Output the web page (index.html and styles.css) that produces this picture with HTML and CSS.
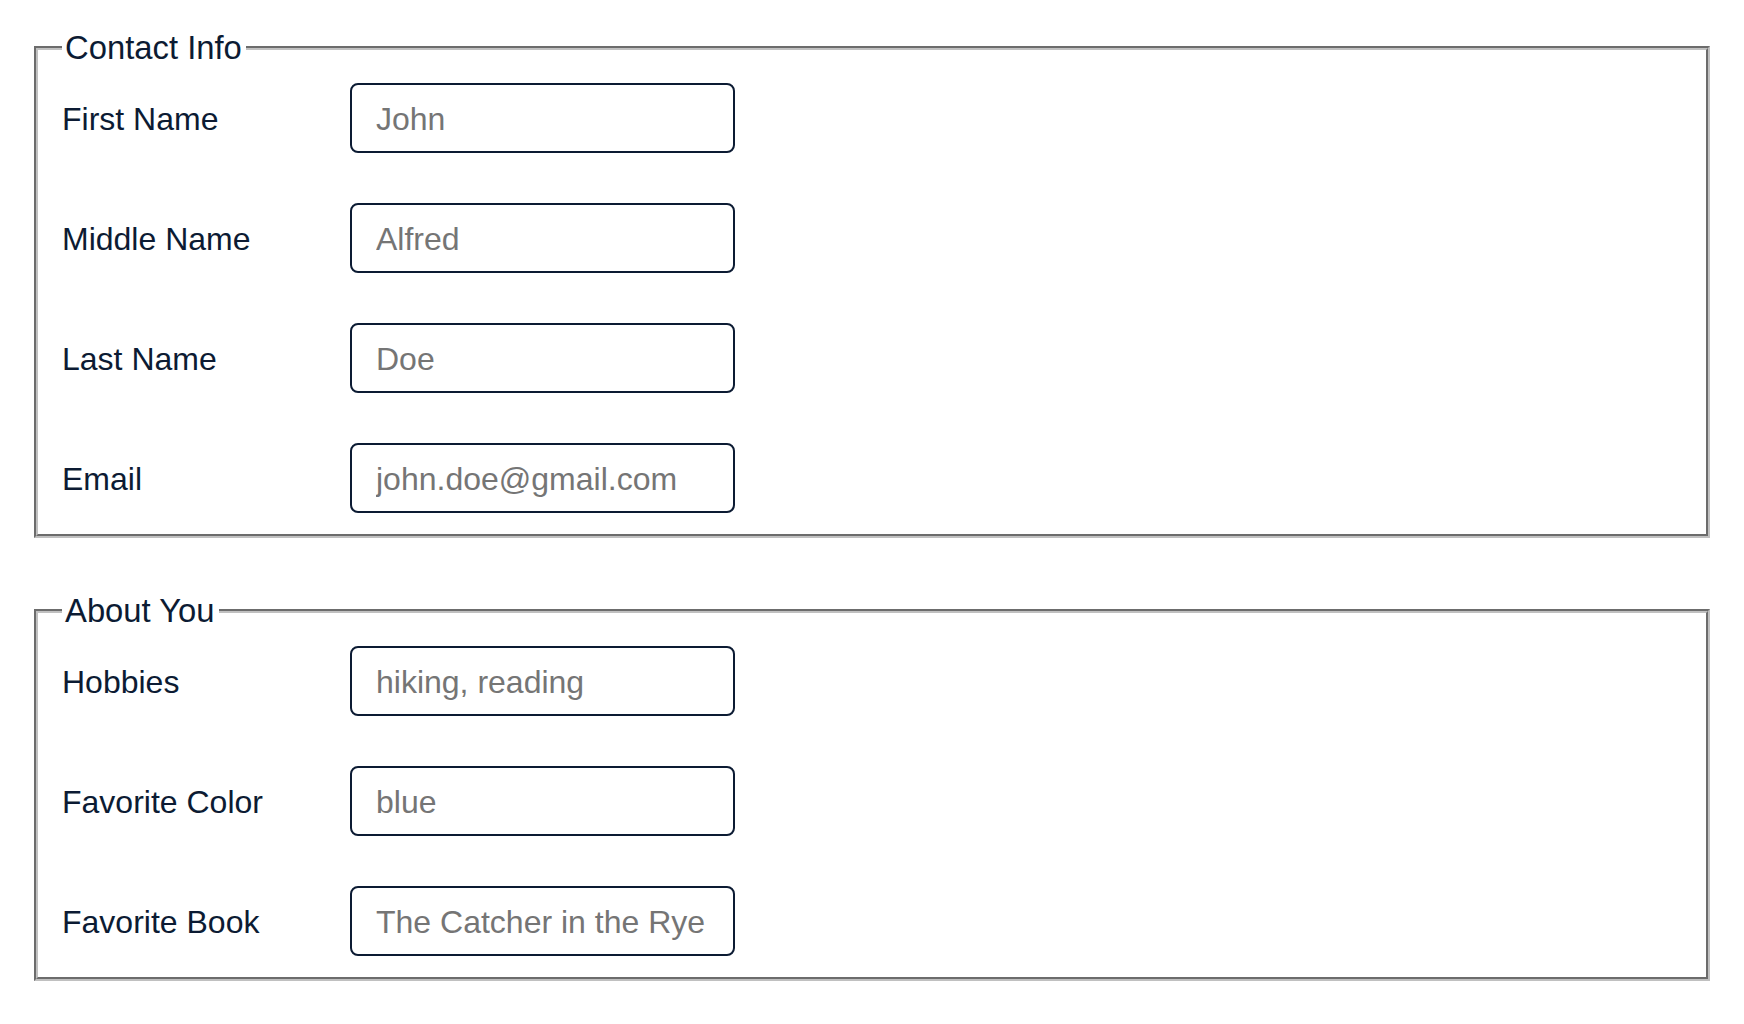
FILE: index.html
```html
<!DOCTYPE html>
<html lang="en">
<head>
<meta charset="utf-8">
<title>Form</title>
<link rel="stylesheet" href="styles.css">
</head>
<body>
<form class="page">
  <fieldset class="group">
    <legend class="group-title">Contact Info</legend>
    <div class="row"><label class="row-label" for="first">First Name</label><input class="row-input" id="first" type="text" placeholder="John"></div>
    <div class="row"><label class="row-label" for="middle">Middle Name</label><input class="row-input" id="middle" type="text" placeholder="Alfred"></div>
    <div class="row"><label class="row-label" for="last">Last Name</label><input class="row-input" id="last" type="text" placeholder="Doe"></div>
    <div class="row"><label class="row-label" for="email">Email</label><input class="row-input" id="email" type="email" placeholder="john.doe@gmail.com"></div>
  </fieldset>
  <fieldset class="group">
    <legend class="group-title">About You</legend>
    <div class="row"><label class="row-label" for="hobbies">Hobbies</label><input class="row-input" id="hobbies" type="text" placeholder="hiking, reading"></div>
    <div class="row"><label class="row-label" for="color">Favorite Color</label><input class="row-input" id="color" type="text" placeholder="blue"></div>
    <div class="row"><label class="row-label" for="book">Favorite Book</label><input class="row-input" id="book" type="text" placeholder="The Catcher in the Rye"></div>
  </fieldset>
</form>
</body>
</html>
```

FILE: styles.css
```css
html, body {
  margin: 0;
  background: #ffffff;
}

body {
  font-family: "Liberation Sans", Arial, sans-serif;
  color: #0c1b33;
}

.page {
  display: flex;
  flex-direction: column;
  gap: 54px;
  padding: 29px 34px 0;
}

.group {
  margin: 0;
  min-width: 0;
  border: 4px groove rgb(192, 192, 192);
  padding: 17px 0 21px 24px;
  display: flex;
  flex-direction: column;
  gap: 50px;
}

.group-title {
  padding: 0 4px 0 3px;
  font-size: 32.8px;
  line-height: 37px;
  color: #0c1b33;
}

.row {
  display: flex;
  align-items: baseline;
}

.row-label {
  flex: none;
  width: 288px;
  font-size: 32px;
}

.row-input {
  flex: none;
  box-sizing: border-box;
  width: 385px;
  height: 70px;
  margin: 0;
  border: 2px solid #0c1b33;
  border-radius: 8px;
  padding: 3px 23px 0 24px;
  font-family: "Liberation Sans", Arial, sans-serif;
  font-size: 32px;
  color: #0c1b33;
  background: #ffffff;
  outline: none;
}

.row-input::placeholder {
  color: #757575;
  opacity: 1;
}
```
